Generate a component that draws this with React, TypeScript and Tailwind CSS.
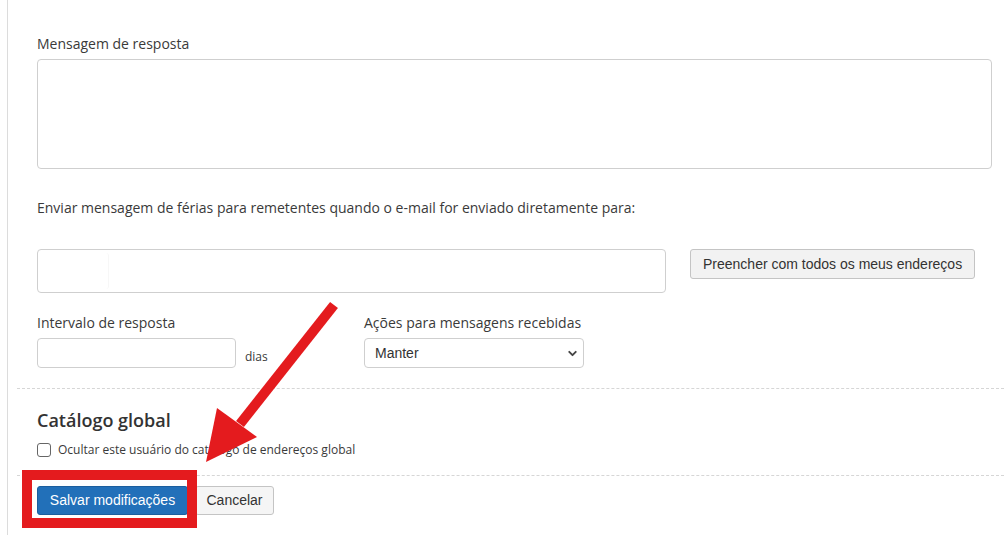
import { ChevronDown } from "lucide-react";

export default function App() {
  return (
    <div className="relative w-[1004px] h-[535px] overflow-hidden bg-white font-['Open_Sans',sans-serif] text-[#333]">
      <div className="ml-[7px] h-full border-l border-[#dcdcdc] pl-[9px]">
        {/* Reply message */}
        <div className="pl-[20px] pr-[12px] pt-[34px]">
          <label className="block text-[14px] leading-[20px] text-[#3a3a3a]">Mensagem de resposta</label>
          <div className="mt-[5px] h-[110px] w-full rounded-[4px] border border-[#cfcfcf] bg-white" />

          <p className="mt-[29px] text-[14px] leading-[20px] text-[#3a3a3a]">
            Enviar mensagem de férias para remetentes quando o e-mail for enviado diretamente para:
          </p>

          <div className="mt-[31px] flex items-start">
            <div className="flex h-[44px] w-[629px] rounded-[4px] border border-[#cfcfcf] bg-white p-[3px]">
              <div className="h-full w-[68px] rounded-[3px] border-r border-[#f7f7f7]" />
            </div>
            <button className="ml-[24px] h-[30px] rounded-[3px] border border-[#c4c4c4] bg-[#f2f2f2] px-[12px] font-['Liberation_Sans',Arial,sans-serif] text-[14px] text-[#333]">
              Preencher com todos os meus endereços
            </button>
          </div>

          <div className="mt-[20px] flex">
            <div className="w-[327px]">
              <label className="block text-[14px] leading-[20px] text-[#3a3a3a]">Intervalo de resposta</label>
              <div className="mt-[5px] flex items-end">
                <div className="h-[30px] w-[199px] rounded-[4px] border border-[#cfcfcf] bg-white" />
                <span className="ml-[9px] mb-[3px] text-[12px] leading-[16px] text-[#3a3a3a]">dias</span>
              </div>
            </div>
            <div>
              <label className="block text-[14px] leading-[20px] text-[#3a3a3a]">Ações para mensagens recebidas</label>
              <div className="mt-[5px] flex h-[30px] w-[220px] items-center justify-between rounded-[4px] border border-[#cfcfcf] bg-white pl-[10px] pr-[4px] font-['Liberation_Sans',Arial,sans-serif] text-[14px] text-[#333]">
                <span>Manter</span>
                <ChevronDown size={13} strokeWidth={3.5} className="text-[#444]" />
              </div>
            </div>
          </div>
        </div>

        {/* Global catalog */}
        <div className="mt-[20px] border-t border-dashed border-[#d6d6d6] pl-[20px] pt-[18px]">
          <h2 className="text-[18px] font-semibold leading-[26px] text-[#333]">Catálogo global</h2>
          <div className="mt-[9px] flex items-center">
            <span className="h-[14px] w-[14px] rounded-[3px] border border-[#666] bg-white" />
            <span className="ml-[7px] text-[12px] leading-[16px] text-[#3a3a3a]">
              Ocultar este usuário do catálogo de endereços global
            </span>
          </div>
        </div>

        {/* Form buttons */}
        <div className="mt-[17px] flex gap-[7px] border-t border-dashed border-[#d6d6d6] pl-[20px] pt-[10px]">
          <button className="h-[29px] w-[151px] rounded-[3px] border border-[#1b5e9e] bg-[#2270b9] font-['Liberation_Sans',Arial,sans-serif] text-[14px] text-white">
            Salvar modificações
          </button>
          <button className="h-[29px] w-[79px] rounded-[3px] border border-[#c4c4c4] bg-[#f5f5f5] font-['Liberation_Sans',Arial,sans-serif] text-[14px] text-[#333]">
            Cancelar
          </button>
        </div>
      </div>

      {/* Annotation: red box and arrow */}
      <div className="absolute left-[22px] top-[470px] h-[58px] w-[175px] border-[10px] border-[#e41b1e]" />
      <svg className="pointer-events-none absolute left-0 top-0" width="1004" height="535" viewBox="0 0 1004 535">
        <line x1="334" y1="305" x2="240" y2="424" stroke="#e41b1e" strokeWidth="10" />
        <polygon points="206,462 217,408 257,437" fill="#e41b1e" />
      </svg>
    </div>
  );
}
